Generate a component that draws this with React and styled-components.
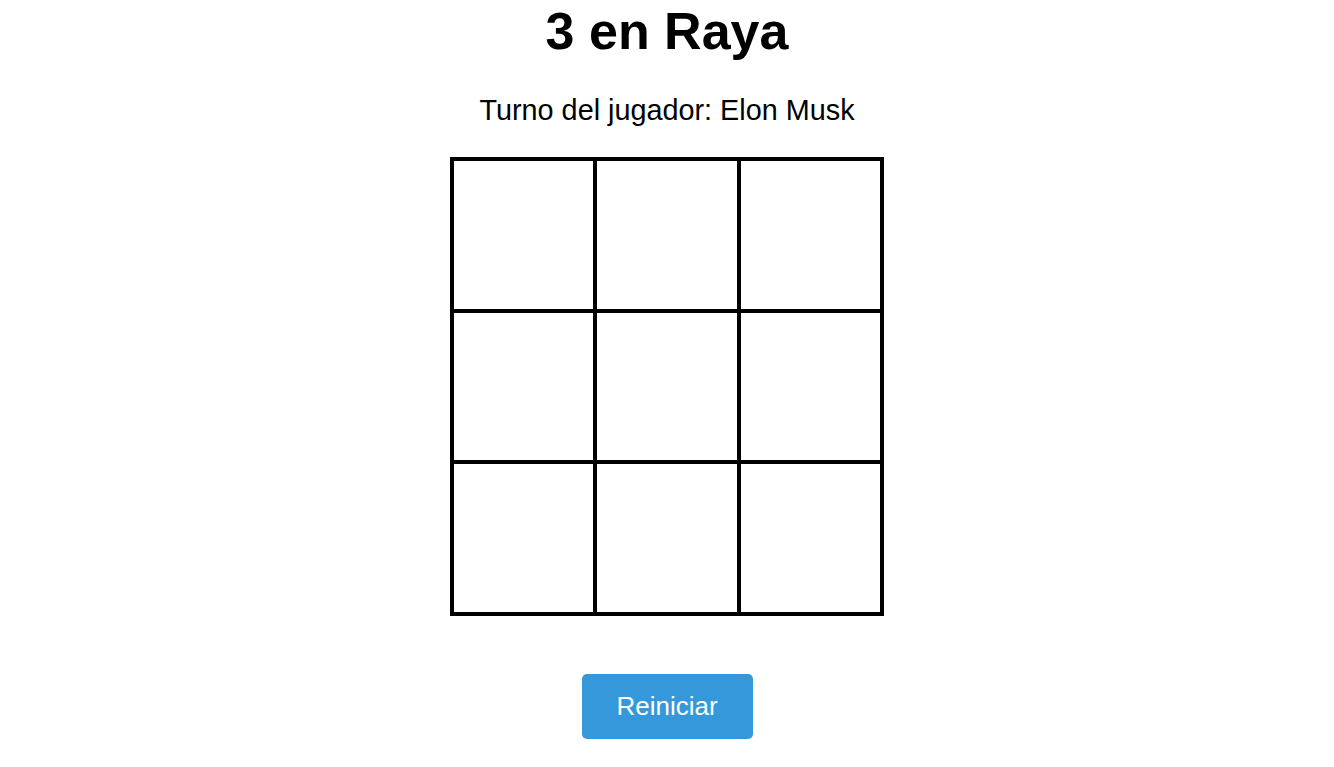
import styled, { createGlobalStyle } from 'styled-components';

const GlobalStyle = createGlobalStyle`
  html, body {
    margin: 0;
    padding: 0;
    background: #fff;
  }
  body {
    font-family: 'Liberation Sans', Arial, sans-serif;
    color: #000;
  }
`

const Page = styled.main`
  display: flex;
  flex-direction: column;
  align-items: center;
  padding-top: 1px;
`
const Title = styled.h1`
  margin: 0;
  font-size: 52px;
  font-weight: bold;
  line-height: 60px;
`
const Turn = styled.p`
  margin: 33px 0 0;
  font-size: 28.8px;
  line-height: 33px;
`
const Board = styled.div`
  margin-top: 30px;
  display: grid;
  grid-template-columns: repeat(3, 139.67px);
  grid-template-rows: repeat(3, 147.67px);
  gap: 4px;
  padding: 4px;
  background: #000;
`
const Cell = styled.button`
  border: none;
  padding: 0;
  background: #fff;
  font: bold 64px/1 'Liberation Sans', Arial, sans-serif;
  cursor: pointer;
`
const ResetButton = styled.button`
  margin-top: 58px;
  width: 171px;
  height: 65px;
  border: none;
  border-radius: 5px;
  background: #3498db;
  color: #fff;
  font: 26px/1 'Liberation Sans', Arial, sans-serif;
  cursor: pointer;
`

function App() {
  const cells = Array(9).fill(null);

  return (
    <>
      <GlobalStyle />
      <Page>
        <Title>3 en Raya</Title>
        <Turn>Turno del jugador: Elon Musk</Turn>
        <Board>
          {cells.map((c, i) => (
            <Cell key={i}>{c}</Cell>
          ))}
        </Board>
        <ResetButton>Reiniciar</ResetButton>
      </Page>
    </>
  );
}

export default App;
